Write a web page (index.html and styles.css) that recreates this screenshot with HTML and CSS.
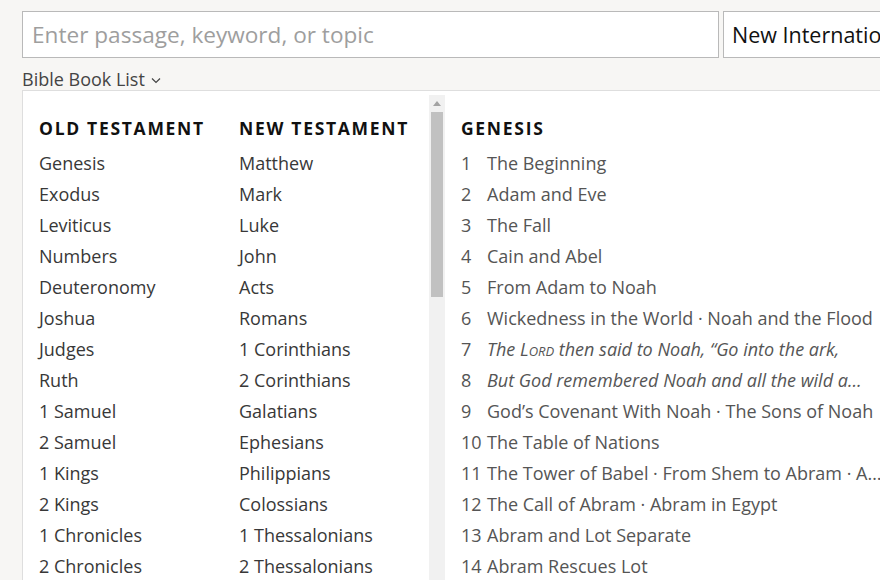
FILE: index.html
```html
<!DOCTYPE html>
<html>
<head>
<meta charset="utf-8">
<link rel="stylesheet" href="styles.css">
</head>
<body>
<div class="top">
  <div class="search"><span class="placeholder">Enter passage, keyword, or topic</span></div>
  <div class="version">New International Version</div>
</div>
<div class="toggle">Bible Book List <svg class="chev" width="10" height="7" viewBox="0 0 10 7"><path d="M1 1.5 L5 5.5 L9 1.5" fill="none" stroke="#444" stroke-width="1.2"/></svg></div>
<div class="panel">
  <div class="books">
    <div class="col">
      <div class="head">OLD TESTAMENT</div>
      <div class="item">Genesis</div>
      <div class="item">Exodus</div>
      <div class="item">Leviticus</div>
      <div class="item">Numbers</div>
      <div class="item">Deuteronomy</div>
      <div class="item">Joshua</div>
      <div class="item">Judges</div>
      <div class="item">Ruth</div>
      <div class="item">1 Samuel</div>
      <div class="item">2 Samuel</div>
      <div class="item">1 Kings</div>
      <div class="item">2 Kings</div>
      <div class="item">1 Chronicles</div>
      <div class="item">2 Chronicles</div>
    </div>
    <div class="col">
      <div class="head">NEW TESTAMENT</div>
      <div class="item">Matthew</div>
      <div class="item">Mark</div>
      <div class="item">Luke</div>
      <div class="item">John</div>
      <div class="item">Acts</div>
      <div class="item">Romans</div>
      <div class="item">1 Corinthians</div>
      <div class="item">2 Corinthians</div>
      <div class="item">Galatians</div>
      <div class="item">Ephesians</div>
      <div class="item">Philippians</div>
      <div class="item">Colossians</div>
      <div class="item">1 Thessalonians</div>
      <div class="item">2 Thessalonians</div>
    </div>
  </div>
  <div class="scrollbar">
    <svg class="arrow" width="8" height="5" viewBox="0 0 8 5"><path d="M0 5 L4 0 L8 5 Z" fill="#a3a3a3"/></svg>
    <div class="thumb"></div>
  </div>
  <div class="chapters">
    <div class="head">GENESIS</div>
    <div class="ch"><span class="num">1</span><span class="t">The Beginning</span></div>
    <div class="ch"><span class="num">2</span><span class="t">Adam and Eve</span></div>
    <div class="ch"><span class="num">3</span><span class="t">The Fall</span></div>
    <div class="ch"><span class="num">4</span><span class="t">Cain and Abel</span></div>
    <div class="ch"><span class="num">5</span><span class="t">From Adam to Noah</span></div>
    <div class="ch"><span class="num">6</span><span class="t">Wickedness in the World · Noah and the Flood</span></div>
    <div class="ch"><span class="num">7</span><span class="t it">The L<span class="sc">ord</span> then said to Noah, “Go into the ark,</span></div>
    <div class="ch"><span class="num">8</span><span class="t it">But God remembered Noah and all the wild a…</span></div>
    <div class="ch"><span class="num">9</span><span class="t">God’s Covenant With Noah · The Sons of Noah</span></div>
    <div class="ch"><span class="num">10</span><span class="t">The Table of Nations</span></div>
    <div class="ch"><span class="num">11</span><span class="t">The Tower of Babel · From Shem to Abram · A…</span></div>
    <div class="ch"><span class="num">12</span><span class="t">The Call of Abram · Abram in Egypt</span></div>
    <div class="ch"><span class="num">13</span><span class="t">Abram and Lot Separate</span></div>
    <div class="ch"><span class="num">14</span><span class="t">Abram Rescues Lot</span></div>
  </div>
</div>
</body>
</html>
```
FILE: styles.css
```css
html, body {
  margin: 0;
  padding: 0;
  width: 880px;
  height: 580px;
  overflow: hidden;
  background: #f7f6f4;
  font-family: "Open Sans", "Noto Sans", sans-serif;
}
.top {
  display: flex;
  gap: 4px;
  padding: 11px 0 0 22px;
}
.search, .version {
  box-sizing: border-box;
  height: 47px;
  border: 1px solid #b9b9b9;
  background: #fff;
  display: flex;
  align-items: center;
  white-space: nowrap;
  overflow: hidden;
}
.search {
  width: 697px;
  flex: none;
  padding-left: 9px;
}
.placeholder {
  font-size: 22.6px;
  color: #9e9e9e;
}
.version {
  width: 300px;
  flex: none;
  padding-left: 8px;
  font-size: 21.5px;
  color: #111;
}
.toggle {
  margin: 10px 0 0 22px;
  height: 22px;
  font-size: 18px;
  line-height: 22px;
  color: #444;
  display: flex;
  align-items: center;
  gap: 6px;
}
.chev { margin-top: 2px; }
.panel {
  margin-left: 22px;
  border-top: 1px solid #dedede;
  border-left: 1px solid #dedede;
  background: #fff;
  height: 500px;
  display: flex;
}
.books {
  width: 406px;
  flex: none;
  box-sizing: border-box;
  padding: 22px 0 0 16px;
  display: flex;
}
.col { width: 200px; flex: none; }
.head {
  font-size: 17.5px;
  font-weight: 700;
  letter-spacing: 1.7px;
  color: #111;
  height: 31px;
  line-height: 31px;
  margin-bottom: 4px;
  white-space: nowrap;
}
.item {
  font-size: 18px;
  color: #383838;
  height: 31px;
  line-height: 31px;
  white-space: nowrap;
}
.scrollbar {
  width: 16px;
  flex: none;
  margin-top: 4px;
  background: #f1f1f1;
  display: flex;
  flex-direction: column;
  align-items: center;
}
.arrow { margin-top: 6px; }
.thumb {
  margin-top: 6px;
  width: 12px;
  height: 185px;
  background: #c1c1c1;
}
.chapters {
  flex: 1;
  min-width: 0;
  box-sizing: border-box;
  padding: 22px 0 0 16px;
  overflow: hidden;
}
.ch {
  display: flex;
  height: 31px;
  line-height: 31px;
  font-size: 18px;
  color: #555;
  white-space: nowrap;
}
.num { width: 26px; flex: none; }
.t { white-space: nowrap; }
.it { font-style: italic; }
.sc { font-variant: small-caps; }
```
